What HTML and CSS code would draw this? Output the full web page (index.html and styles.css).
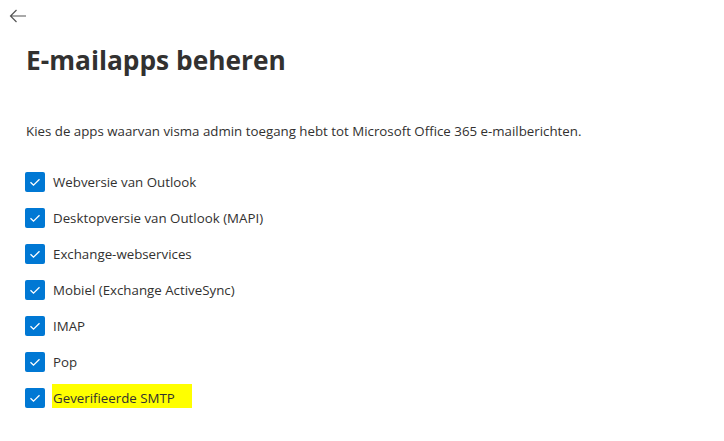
FILE: index.html
```html
<!DOCTYPE html>
<html lang="nl">
<head>
    <meta charset="UTF-8">
    <title>E-mailapps beheren</title>
    <link rel="stylesheet" href="styles.css">
</head>
<body>
    <div class="panel">
        <button class="back" aria-label="Terug">
            <svg width="18" height="14" viewBox="0 0 18 14"><path d="M17 7H1.5M7.5 1L1.5 7l6 6" fill="none" stroke="#555" stroke-width="1.2"/></svg>
        </button>
        <h1>E-mailapps beheren</h1>
        <p class="intro">Kies de apps waarvan visma admin toegang hebt tot Microsoft Office 365 e-mailberichten.</p>

        <ul class="apps">
            <li><span class="box"></span><span>Webversie van Outlook</span></li>
            <li><span class="box"></span><span>Desktopversie van Outlook (MAPI)</span></li>
            <li><span class="box"></span><span>Exchange-webservices</span></li>
            <li><span class="box"></span><span>Mobiel (Exchange ActiveSync)</span></li>
            <li><span class="box"></span><span>IMAP</span></li>
            <li><span class="box"></span><span>Pop</span></li>
            <li><span class="box"></span><span class="marked">Geverifieerde SMTP</span></li>
        </ul>
    </div>
</body>
</html>
```

FILE: styles.css
```css
* {
    box-sizing: border-box;
}
body {
    margin: 0;
    background: #fff;
    font-family: "Open Sans", "Noto Sans", sans-serif;
    color: #323130;
}
.panel {
    padding: 9px 0 0 25px;
}
.back {
    display: block;
    border: none;
    background: none;
    padding: 0;
    margin-left: -16px;
    width: 18px;
    height: 16px;
    cursor: pointer;
}
h1 {
    margin: 17px 0 0 1px;
    font-size: 26.3px;
    font-weight: 700;
    line-height: 36px;
    color: #323130;
}
.intro {
    margin: 43px 0 0 1px;
    font-size: 13.3px;
    line-height: 20px;
}
.apps {
    list-style: none;
    padding: 0;
    margin: 31px 0 0;
    display: flex;
    flex-direction: column;
    gap: 16px;
}
.apps li {
    display: flex;
    align-items: center;
    gap: 8px;
    height: 20px;
    font-size: 13.3px;
}
.box {
    width: 20px;
    height: 20px;
    border-radius: 2px;
    background: #0078d4 url("data:image/svg+xml,%3Csvg xmlns='http://www.w3.org/2000/svg' width='20' height='20'%3E%3Cpath d='M5.5 10.2l3 3 6-6' fill='none' stroke='white' stroke-width='1.3'/%3E%3C/svg%3E") no-repeat center;
    flex: none;
}
.marked {
    background: #ffff00;
    padding: 5px 17px 6px 1px;
    margin-left: -1px;
}
```
